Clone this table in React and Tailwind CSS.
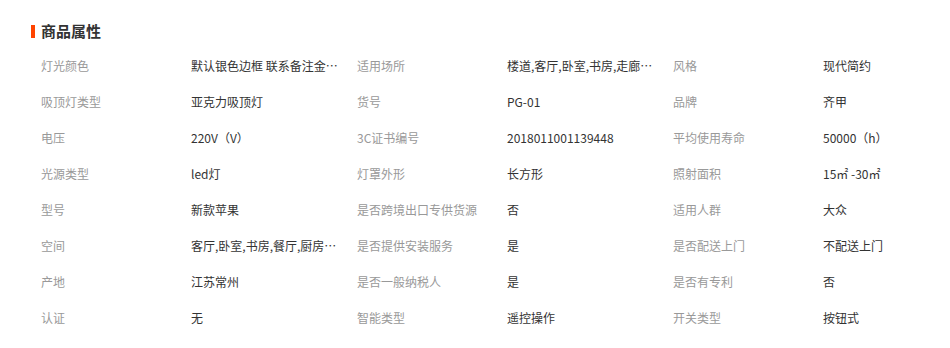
const attrs = [
    ['灯光颜色', '默认银色边框 联系备注金…', '适用场所', '楼道,客厅,卧室,书房,走廊…', '风格', '现代简约'],
    ['吸顶灯类型', '亚克力吸顶灯', '货号', 'PG-01', '品牌', '齐甲'],
    ['电压', '220V（V）', '3C证书编号', '2018011001139448', '平均使用寿命', '50000（h）'],
    ['光源类型', 'led灯', '灯罩外形', '长方形', '照射面积', '15㎡ -30㎡'],
    ['型号', '新款苹果', '是否跨境出口专供货源', '否', '适用人群', '大众'],
    ['空间', '客厅,卧室,书房,餐厅,厨房…', '是否提供安装服务', '是', '是否配送上门', '不配送上门'],
    ['产地', '江苏常州', '是否一般纳税人', '是', '是否有专利', '否'],
    ['认证', '无', '智能类型', '遥控操作', '开关类型', '按钮式'],
];

export default function App() {
    const labelStyles = 'w-[150px] shrink-0 whitespace-nowrap text-[#999999]';
    const valueStyles = 'w-[150px] mr-[16px] shrink-0 whitespace-nowrap text-[#333333]';

    return (
        <div className="w-[950px] h-[348px] bg-white font-['Noto_Sans_CJK_SC',sans-serif] text-[12px]">
            <div className="flex items-center pl-[31px] pt-[22px] h-[40px]">
                <span className="w-[4px] h-[13px] bg-[#ff4400] mr-[6px]" />
                <h2 className="text-[15px] font-bold text-[#333333] leading-[18px]">商品属性</h2>
            </div>
            <div className="pl-[41px] pt-[8px]">
                {attrs.map((row, i) => (
                    <div key={i} className="flex items-center h-[36px] leading-[16px]">
                        <span className={labelStyles}>{row[0]}</span>
                        <span className={valueStyles}>{row[1]}</span>
                        <span className={labelStyles}>{row[2]}</span>
                        <span className={valueStyles}>{row[3]}</span>
                        <span className={labelStyles}>{row[4]}</span>
                        <span className={valueStyles}>{row[5]}</span>
                    </div>
                ))}
            </div>
        </div>
    );
}
